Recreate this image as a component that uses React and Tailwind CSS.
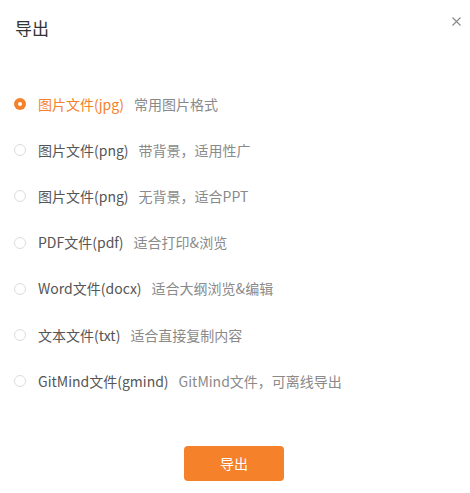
import React, { useState } from "react";

const options = [
  { id: "jpg", label: "图片文件(jpg)", desc: "常用图片格式" },
  { id: "png", label: "图片文件(png)", desc: "带背景，适用性广" },
  { id: "png-t", label: "图片文件(png)", desc: "无背景，适合PPT" },
  { id: "pdf", label: "PDF文件(pdf)", desc: "适合打印&浏览" },
  { id: "docx", label: "Word文件(docx)", desc: "适合大纲浏览&编辑" },
  { id: "txt", label: "文本文件(txt)", desc: "适合直接复制内容" },
  { id: "gmind", label: "GitMind文件(gmind)", desc: "GitMind文件，可离线导出" },
];

export default function App() {
  const [selected, setSelected] = useState("jpg");

  return (
    <div
      className="w-[470px] h-[493px] bg-white relative flex flex-col"
      style={{ fontFamily: '"Noto Sans CJK SC", "Noto Sans", sans-serif' }}
    >
      <div className="pl-[15px] pt-[16px] h-[75px]">
        <h1 className="text-[17px] leading-6 text-[#333]">导出</h1>
      </div>
      <button className="absolute right-[8px] top-[15px] w-3 h-3 flex items-center justify-center text-[#888]">
        <svg width="9" height="9" viewBox="0 0 9 9">
          <path d="M0.5 0.5 L8.5 8.5 M8.5 0.5 L0.5 8.5" stroke="currentColor" strokeWidth="1.1" />
        </svg>
      </button>

      <div className="flex flex-col pl-[14px] pt-[6px]">
        {options.map(o => {
          const active = selected === o.id;
          return (
            <div
              key={o.id}
              onClick={() => setSelected(o.id)}
              className="h-[46.2px] flex items-center cursor-pointer"
            >
              <span
                className={
                  "w-3 h-3 rounded-full shrink-0 flex items-center justify-center " +
                  (active ? "bg-[#f5812b]" : "border border-[#dcdcdc]")
                }
              >
                {active && <span className="w-1 h-1 rounded-full bg-white" />}
              </span>
              <span className={"ml-3 text-[14px] " + (active ? "text-[#f5812b]" : "text-[#555]")}>
                {o.label}
              </span>
              <span className="ml-[10px] text-[14px] text-[#8a8a8a]">{o.desc}</span>
            </div>
          );
        })}
      </div>

      <div className="flex justify-center mt-auto mb-[12px]">
        <button className="w-[100px] h-[35px] rounded bg-[#f5812b] text-white text-[14px] -translate-x-px">
          导出
        </button>
      </div>
    </div>
  );
}
